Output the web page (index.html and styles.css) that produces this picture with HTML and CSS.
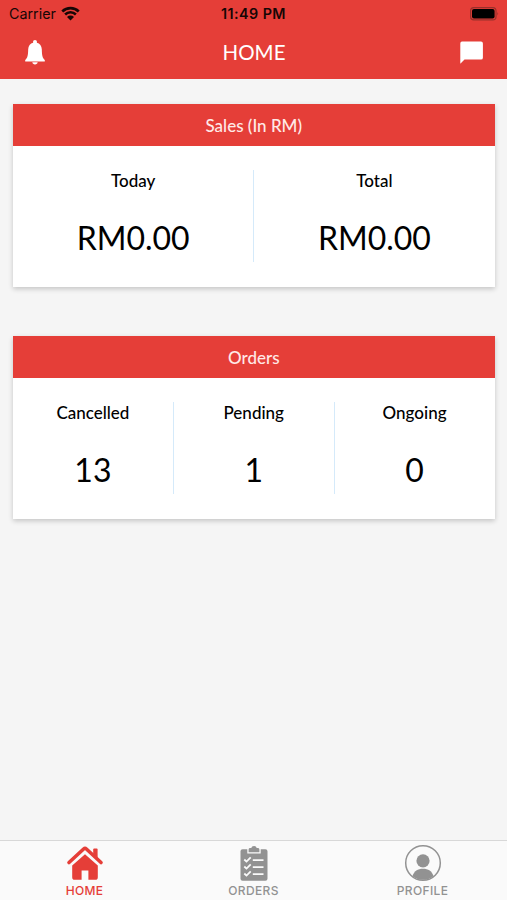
FILE: index.html
```
<!DOCTYPE html>
<html lang="en">
<head>
    <meta charset="utf-8">
    <meta name="viewport" content="width=device-width, initial-scale=1">
    <title>Home</title>
    <link rel="stylesheet" href="styles.css">
</head>
<body>
    <!-- header -->
    <header class="header">
        <div class="status-bar">
            <div class="carrier">
                <span>Carrier</span>
                <svg class="wifi" viewBox="0 0 18 14">
                    <path d="M1.2 5.1a11.2 11.2 0 0 1 15.6 0M3.9 7.9a7.4 7.4 0 0 1 10.2 0" fill="none" stroke="#160605" stroke-width="2.5"/>
                    <path d="M5.7 10.2a4.8 4.8 0 0 1 6.6 0L9 13.6z" fill="#160605"/>
                </svg>
            </div>
            <div class="clock">11:49 PM</div>
            <svg class="battery" viewBox="0 0 30 14">
                <rect x=".6" y=".6" width="25.4" height="12.3" rx="3.2" fill="none" stroke="#98302b" stroke-width="1.2"/>
                <rect x="2" y="2" width="22.6" height="9.5" rx="2" fill="#000"/>
                <path d="M27.4 5q1.6 1.7 0 3.6z" fill="#98302b"/>
            </svg>
        </div>
        <div class="nav-bar">
            <svg class="bell" viewBox="0 0 20 25">
                <path d="M10 0c1.2 0 1.9.8 1.9 1.8v.9c2.9.8 4.8 3 4.9 6.6.2 6.6.7 8.6 3 10.7v1.5H.2V20c2.3-2.1 2.8-4.1 3-10.7.1-3.6 2-5.8 4.9-6.6v-.9C8.1.8 8.8 0 10 0zM7.3 22.3h5.4c-.2 1.4-1.2 2.1-2.7 2.1s-2.5-.7-2.7-2.1z" fill="#fff"/>
            </svg>
            <h1 class="title">HOME</h1>
            <svg class="chat" viewBox="0 0 23 23">
                <path d="M2 .5h19a1.9 1.9 0 0 1 1.9 1.9v14.3a1.9 1.9 0 0 1-1.9 1.9H4.5L.3 22.8V2.4A1.9 1.9 0 0 1 2 .5z" fill="#fff"/>
            </svg>
        </div>
    </header>

    <main class="content">
        <!-- sales -->
        <section class="card">
            <h2 class="card-title">Sales (In RM)</h2>
            <div class="card-body">
                <div class="stat">
                    <div class="label">Today</div>
                    <div class="value">RM0.00</div>
                </div>
                <div class="stat">
                    <div class="label">Total</div>
                    <div class="value">RM0.00</div>
                </div>
            </div>
        </section>

        <!-- orders -->
        <section class="card">
            <h2 class="card-title">Orders</h2>
            <div class="card-body">
                <div class="stat">
                    <div class="label">Cancelled</div>
                    <div class="value">13</div>
                </div>
                <div class="stat">
                    <div class="label">Pending</div>
                    <div class="value">1</div>
                </div>
                <div class="stat">
                    <div class="label">Ongoing</div>
                    <div class="value">0</div>
                </div>
            </div>
        </section>
    </main>

    <!-- tabs -->
    <nav class="tabs">
        <a class="tab active">
            <svg viewBox="0 0 38 38">
                <path d="M3 18.5L17.6 5q1.4-1.2 2.8 0L35 18.5" fill="none" stroke="currentColor" stroke-width="3.6" stroke-linecap="round" stroke-linejoin="round"/>
                <path d="M27.2 5.4q0-1 1-1h2.4q1 0 1 1v8.6l-4.4-4z" fill="currentColor"/>
                <path d="M19 10.2l12.8 11.4v11.6a2.6 2.6 0 0 1-2.6 2.6h-6.8v-9.4h-6.8v9.4H8.8a2.6 2.6 0 0 1-2.6-2.6V21.6z" fill="currentColor"/>
            </svg>
            <span>HOME</span>
        </a>
        <a class="tab">
            <svg viewBox="0 0 38 38">
                <path d="M7.6 5.2h4.7v4.3h13.4V5.2h4.7a2.1 2.1 0 0 1 2.1 2.1v27.4a2.1 2.1 0 0 1-2.1 2.1H7.6a2.1 2.1 0 0 1-2.1-2.1V7.3a2.1 2.1 0 0 1 2.1-2.1z" fill="currentColor"/>
                <path d="M13.6 8.3V5.4q0-1.3 1.6-1.3h1.1q.3-2 2.7-2t2.7 2h1.1q1.6 0 1.6 1.3v2.9z" fill="currentColor"/>
                <path d="M9.3 15.5l2.2 2.1 4.2-4.2M9.3 22.5l2.2 2.1 4.2-4.2M9.3 29.5l2.2 2.1 4.2-4.2M17.8 16.2h10.7M17.8 23.2h10.7M17.8 30.2h10.7" fill="none" stroke="#fafafa" stroke-width="1.8"/>
            </svg>
            <span>ORDERS</span>
        </a>
        <a class="tab">
            <svg viewBox="0 0 38 38">
                <circle cx="19" cy="19" r="17.3" fill="none" stroke="currentColor" stroke-width="1.5"/>
                <circle cx="19" cy="16.8" r="6.6" fill="currentColor"/>
                <path d="M8.5 32.2c1.3-5 5.4-7.4 10.5-7.4s9.2 2.4 10.5 7.4a17 17 0 0 1-21 0z" fill="currentColor"/>
            </svg>
            <span>PROFILE</span>
        </a>
    </nav>
</body>
</html>
```

FILE: styles.css
```
* {
  box-sizing: border-box;
}

body {
  margin: 0;
  height: 100vh;
  display: flex;
  flex-direction: column;
  background: #f5f5f5;
  color: #000;
  font-family: Lato, sans-serif;
}

svg {
  display: block;
}

.header {
  height: 79px;
  background: #e53e38;
}

.status-bar {
  display: grid;
  grid-template-columns: 1fr auto 1fr;
  align-items: center;
  height: 27px;
  padding: 0 7px 0 9px;
  color: #160605;
  font: 14.3px/27px Inter, sans-serif;
}

.carrier {
  display: flex;
  align-items: center;
  gap: 5px;
}

.wifi {
  width: 19px;
  height: 15px;
}

.clock {
  margin-right: 2px;
  font-weight: 600;
  letter-spacing: .45px;
}

.battery {
  width: 30px;
  height: 14px;
  justify-self: end;
}

.nav-bar {
  display: flex;
  justify-content: space-between;
  align-items: center;
  height: 50px;
  padding: 0 24px 0 25px;
}

.bell {
  width: 20px;
  height: 25px;
}

.chat {
  width: 23px;
  height: 23px;
}

.title {
  margin: 0 0 0 3px;
  color: #fff;
  font-size: 20.5px;
  font-weight: 400;
  line-height: 24px;
}

.content {
  flex: 1;
  padding: 24.5px 12.5px 0 13px;
}

.card {
  height: 183.5px;
  margin-bottom: 48.5px;
  background: #fff;
  box-shadow: 0 2px 5px rgba(0, 0, 0, .2);
}

.card-title {
  margin: 0;
  height: 42.5px;
  background: #e53e38;
  color: #ffe9e7;
  font-size: 17px;
  font-weight: 500;
  line-height: 43px;
  text-align: center;
}

.card-body {
  display: flex;
  padding-top: 24px;
}

.stat {
  flex: 1;
  height: 92px;
  text-align: center;
}

.stat + .stat {
  border-left: 1px solid #d5eafa;
}

.label {
  font-size: 17px;
  font-weight: 500;
  line-height: 21px;
}

.value {
  margin-top: 27px;
  font-size: 32px;
  line-height: 39px;
}

/* Bottom tabs */
.tabs {
  display: flex;
  height: 60px;
  border-top: 1px solid #d8d8d8;
  background: #fafafa;
}

.tab {
  flex: 1;
  display: flex;
  flex-direction: column;
  align-items: center;
  padding-top: 3px;
  color: #929292;
  font: 500 12px/18px Inter, sans-serif;
  letter-spacing: .35px;
}

.tab svg {
  width: 38px;
  height: 38px;
}

.tab.active {
  color: #e53e38;
}
```
